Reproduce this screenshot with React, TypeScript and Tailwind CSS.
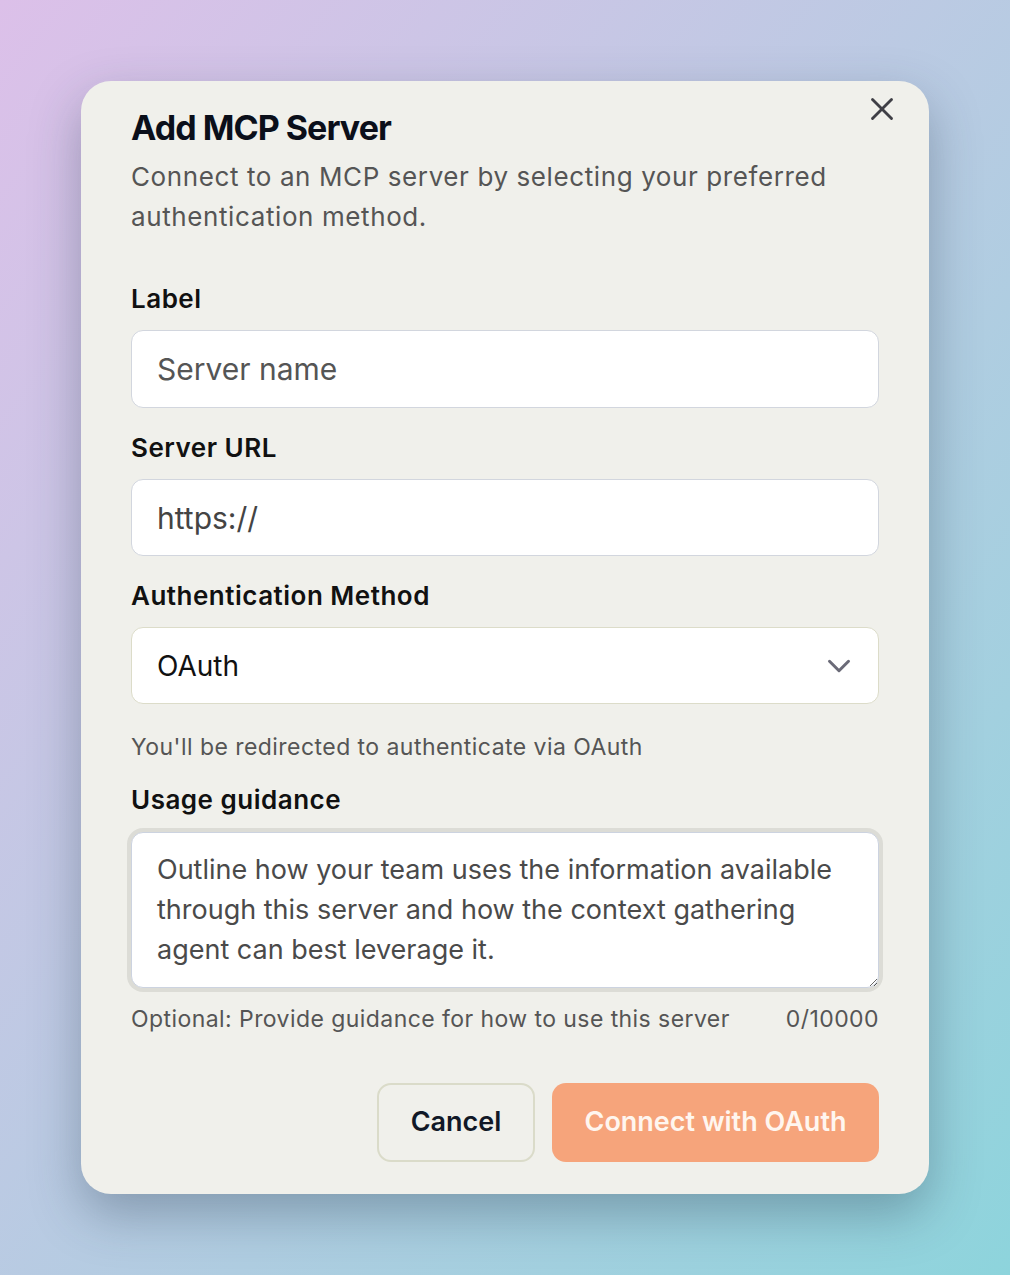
import React from "react";
import { X, ChevronDown } from "lucide-react";

export default function App() {
  return (
    <div
      className="min-h-screen w-full bg-gradient-to-br from-[#dcc0e9] to-[#8dd4dc] flex items-start justify-center pt-[81px] pb-[81px]"
      style={{ fontFamily: "Inter, 'Noto Sans', sans-serif" }}
    >
      <div className="relative w-[848px] rounded-[30px] bg-[#f0f0eb] px-[50px] pt-[27px] pb-[32px] shadow-[0_20px_50px_rgba(40,60,80,0.35)]">
        <button className="absolute top-[9px] right-[28px] text-[#3f3f46]">
          <X size={38} strokeWidth={1.8} />
        </button>

        <h1 className="text-[34px] leading-[40px] font-bold tracking-[-0.028em] text-[#0b0f1a]">
          Add MCP Server
        </h1>
        <p className="mt-[9px] text-[26px] leading-[40px] tracking-[0.6px] text-[#555555]">
          Connect to an MCP server by selecting your preferred authentication method.
        </p>

        <div className="mt-[46px] flex flex-col">
          <label className="text-[26px] leading-[32px] font-semibold tracking-[0.5px] text-[#111111]">Label</label>
          <input
            className="mt-[15px] h-[78px] rounded-[12px] border border-[#d2d6de] bg-white px-[25px] text-[30px] text-[#222] placeholder:text-[#555555] outline-none"
            placeholder="Server name"
          />

          <label className="mt-[24px] text-[26px] leading-[32px] font-semibold tracking-[0.5px] text-[#111111]">
            Server URL
          </label>
          <input
            className="mt-[15px] h-[77px] rounded-[12px] border border-[#d2d6de] bg-white px-[25px] text-[30px] text-[#222] placeholder:text-[#444444] outline-none"
            placeholder="https://"
          />

          <label className="mt-[24px] text-[26px] leading-[32px] font-semibold tracking-[0.5px] text-[#111111]">
            Authentication Method
          </label>
          <div className="mt-[15px] h-[77px] rounded-[12px] border border-[#dcdcc9] bg-white pl-[25px] pr-[20px] flex items-center justify-between">
            <span className="text-[28px] text-[#111111]">OAuth</span>
            <ChevronDown size={38} strokeWidth={1.9} className="text-[#6b6b78]" />
          </div>
          <p className="mt-[29px] text-[23px] leading-[28px] tracking-[0.45px] text-[#555555]">
            You'll be redirected to authenticate via OAuth
          </p>

          <label className="mt-[23px] text-[26px] leading-[32px] font-semibold tracking-[0.5px] text-[#111111]">
            Usage guidance
          </label>
          <textarea
            className="mt-[16px] h-[156px] rounded-[12px] border border-[#ccd3e0] bg-white px-[25px] py-[17px] text-[27px] leading-[40px] text-[#222] placeholder:text-[#4a4a4a] outline-none ring-4 ring-[#dcdcd6] resize-y"
            placeholder="Outline how your team uses the information available through this server and how the context gathering agent can best leverage it."
          />
          <div className="mt-[17px] flex items-center justify-between text-[23px] leading-[28px] tracking-[0.43px] text-[#555555]">
            <span>Optional: Provide guidance for how to use this server</span>
            <span>0/10000</span>
          </div>
        </div>

        <div className="mt-[50px] flex justify-end gap-[17px]">
          <button className="h-[79px] w-[158px] rounded-[14px] border-2 border-[#dadbc9] text-[27px] font-semibold text-[#111827]">
            Cancel
          </button>
          <button className="h-[79px] w-[327px] rounded-[14px] bg-[#f6a47b] text-[27px] font-semibold text-[#fff6ef]">
            Connect with OAuth
          </button>
        </div>
      </div>
    </div>
  );
}
